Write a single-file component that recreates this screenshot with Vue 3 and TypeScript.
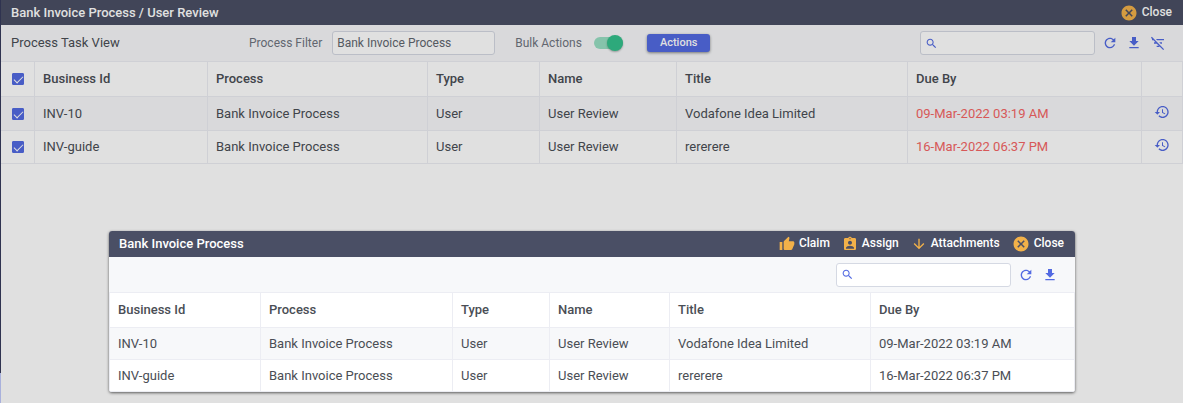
<script setup lang="ts">
import { ref } from 'vue'

interface Task {
  id: string
  process: string
  type: string
  name: string
  title: string
  due: string
}

const tasks: Task[] = [
  { id: 'INV-10', process: 'Bank Invoice Process', type: 'User', name: 'User Review', title: 'Vodafone Idea Limited', due: '09-Mar-2022 03:19 AM' },
  { id: 'INV-guide', process: 'Bank Invoice Process', type: 'User', name: 'User Review', title: 'rererere', due: '16-Mar-2022 06:37 PM' },
]
const columns = ['Business Id', 'Process', 'Type', 'Name', 'Title', 'Due By']

const icons = {
  cancel: 'M12 2C6.47 2 2 6.47 2 12s4.47 10 10 10 10-4.47 10-10S17.53 2 12 2zm5 13.59L15.59 17 12 13.41 8.41 17 7 15.59 10.59 12 7 8.41 8.41 7 12 10.59 15.59 7 17 8.41 13.41 12 17 15.59z',
  search: 'M15.5 14h-.79l-.28-.27C15.41 12.59 16 11.11 16 9.5 16 5.91 13.09 3 9.5 3S3 5.91 3 9.5 5.91 16 9.5 16c1.61 0 3.09-.59 4.23-1.57l.27.28v.79l5 4.99L20.49 19l-4.99-5zm-6 0C7.01 14 5 11.99 5 9.5S7.01 5 9.5 5 14 7.01 14 9.5 11.99 14 9.5 14z',
  refresh: 'M17.65 6.35C16.2 4.9 14.21 4 12 4c-4.42 0-7.99 3.58-7.99 8s3.57 8 7.99 8c3.73 0 6.84-2.55 7.73-6h-2.08c-.82 2.33-3.04 4-5.65 4-3.31 0-6-2.69-6-6s2.69-6 6-6c1.66 0 3.14.69 4.22 1.78L13 11h7V4l-2.35 2.35z',
  download: 'M19 9h-4V3H9v6H5l7 7 7-7zM5 18v2h14v-2H5z',
  filterOff: 'M10.83 8H21V6H8.83l2 2zm5 5H18v-2h-4.17l2 2zM14 16.83V18h-4v-2h3.17l-3-3H6v-2h2.17l-3-3H3V6h.17L1.39 4.22 2.8 2.81l18.38 18.38-1.41 1.41L14 16.83z',
  history: 'M13 3c-4.97 0-9 4.03-9 9H1l3.89 3.89.07.14L9 12H6c0-3.87 3.13-7 7-7s7 3.13 7 7-3.13 7-7 7c-1.93 0-3.68-.79-4.94-2.06l-1.42 1.42C8.27 19.99 10.51 21 13 21c4.97 0 9-4.03 9-9s-4.03-9-9-9zm-1 5v5l4.28 2.54.72-1.21-3.5-2.08V8H12z',
  thumb: 'M1 21h4V9H1v12zm22-11c0-1.1-.9-2-2-2h-6.31l.95-4.57.03-.32c0-.41-.17-.79-.44-1.06L14.17 1 7.59 7.59C7.22 7.95 7 8.45 7 9v10c0 1.1.9 2 2 2h9c.83 0 1.54-.5 1.84-1.22l3.02-7.05c.09-.23.14-.47.14-.73v-2z',
  assign: 'M19 3h-4.18C14.4 1.84 13.3 1 12 1c-1.3 0-2.4.84-2.82 2H5c-1.1 0-2 .9-2 2v14c0 1.1.9 2 2 2h14c1.1 0 2-.9 2-2V5c0-1.1-.9-2-2-2zm-7 0c.55 0 1 .45 1 1s-.45 1-1 1-1-.45-1-1 .45-1 1-1zm0 4c1.66 0 3 1.34 3 3s-1.34 3-3 3-3-1.34-3-3 1.34-3 3-3zm6 12H6v-1.4c0-2 4-3.1 6-3.1s6 1.1 6 3.1V19z',
  arrowDown: 'M20 12l-1.41-1.41L13 16.17V4h-2v12.17l-5.58-5.59L4 12l8 8 8-8z',
}

const dialogActions = [
  { label: 'Claim', icon: icons.thumb, large: false },
  { label: 'Assign', icon: icons.assign, large: false },
  { label: 'Attachments', icon: icons.arrowDown, large: false },
  { label: 'Close', icon: icons.cancel, large: true },
]

const processFilter = ref('Bank Invoice Process')
const bulk = ref(true)
const allSelected = ref(true)
const selected = ref<boolean[]>([true, true])
const search = ref('')
const dialogSearch = ref('')
</script>

<template>
  <div class="page">
    <div class="edge"><span class="edge-dark"></span><span class="edge-light"></span></div>
    <main class="content">
      <header class="bar">
        <h1 class="bar-title">Bank Invoice Process / User Review</h1>
        <button type="button" class="bar-action">
          <svg class="icon icon-lg" viewBox="0 0 24 24"><path :d="icons.cancel" /></svg><span class="bar-label">Close</span>
        </button>
      </header>

      <div class="toolbar">
        <h2 class="view-title">Process Task View</h2>
        <label class="caption" for="process-filter">Process Filter</label>
        <input id="process-filter" v-model="processFilter" class="field" type="text" />
        <label class="caption caption-bulk" for="bulk">Bulk Actions</label>
        <input id="bulk" v-model="bulk" class="switch" type="checkbox" role="switch" />
        <button type="button" class="primary">Actions</button>
        <div class="tools">
          <div class="search">
            <svg class="icon icon-sm" viewBox="0 0 24 24"><path :d="icons.search" /></svg>
            <input v-model="search" type="search" aria-label="Search tasks" />
          </div>
          <div class="tool-group">
            <button type="button" class="tool" aria-label="Refresh">
              <svg class="icon" viewBox="0 0 24 24"><path :d="icons.refresh" /></svg>
            </button>
            <button type="button" class="tool" aria-label="Download">
              <svg class="icon" viewBox="0 0 24 24"><path :d="icons.download" /></svg>
            </button>
            <button type="button" class="tool" aria-label="Clear filters">
              <svg class="icon" viewBox="0 0 24 24"><path :d="icons.filterOff" /></svg>
            </button>
          </div>
        </div>
      </div>

      <table class="grid tasks">
        <colgroup>
          <col class="t-check" /><col class="t-id" /><col class="t-process" /><col class="t-type" />
          <col class="t-name" /><col class="t-title" /><col class="t-due" /><col class="t-log" />
        </colgroup>
        <thead>
          <tr>
            <th class="check-cell"><input v-model="allSelected" class="check" type="checkbox" aria-label="Select all" /></th>
            <th v-for="c in columns" :key="c" scope="col">{{ c }}</th>
            <th></th>
          </tr>
        </thead>
        <tbody>
          <tr v-for="(t, i) in tasks" :key="t.id">
            <td class="check-cell"><input v-model="selected[i]" class="check" type="checkbox" :aria-label="'Select ' + t.id" /></td>
            <td>{{ t.id }}</td>
            <td>{{ t.process }}</td>
            <td>{{ t.type }}</td>
            <td>{{ t.name }}</td>
            <td>{{ t.title }}</td>
            <td class="overdue">{{ t.due }}</td>
            <td class="log-cell">
              <button type="button" class="tool" :aria-label="'History of ' + t.id">
                <svg class="icon" viewBox="0 0 24 24"><path :d="icons.history" /></svg>
              </button>
            </td>
          </tr>
        </tbody>
      </table>
    </main>

    <div class="backdrop">
      <section class="dialog" role="dialog" aria-labelledby="dialog-title">
        <header class="bar dialog-bar">
          <h2 id="dialog-title" class="bar-title">Bank Invoice Process</h2>
          <button v-for="a in dialogActions" :key="a.label" type="button" class="bar-action">
            <svg class="icon" :class="{ 'icon-lg': a.large }" viewBox="0 0 24 24"><path :d="a.icon" /></svg><span class="bar-label">{{ a.label }}</span>
          </button>
        </header>
        <div class="toolbar dialog-toolbar">
          <div class="tools">
            <div class="search">
              <svg class="icon icon-sm" viewBox="0 0 24 24"><path :d="icons.search" /></svg>
              <input v-model="dialogSearch" type="search" aria-label="Search selected tasks" />
            </div>
            <div class="tool-group">
              <button type="button" class="tool" aria-label="Refresh selected">
                <svg class="icon" viewBox="0 0 24 24"><path :d="icons.refresh" /></svg>
              </button>
              <button type="button" class="tool" aria-label="Download selected">
                <svg class="icon" viewBox="0 0 24 24"><path :d="icons.download" /></svg>
              </button>
            </div>
          </div>
        </div>
        <table class="grid picked">
          <colgroup>
            <col class="p-id" /><col class="p-process" /><col class="p-type" />
            <col class="p-name" /><col class="p-title" /><col class="p-due" />
          </colgroup>
          <thead>
            <tr><th v-for="c in columns" :key="c" scope="col">{{ c }}</th></tr>
          </thead>
          <tbody>
            <tr v-for="t in tasks" :key="t.id">
              <td>{{ t.id }}</td>
              <td>{{ t.process }}</td>
              <td>{{ t.type }}</td>
              <td>{{ t.name }}</td>
              <td>{{ t.title }}</td>
              <td>{{ t.due }}</td>
            </tr>
          </tbody>
        </table>
      </section>
    </div>
  </div>
</template>

<style>
body {
  margin: 0;
}
</style>

<style scoped>
.page {
  position: relative;
  display: flex;
  min-height: 100vh;
  background: #fff;
  color: #4a4e55;
  font-family: Roboto, "Liberation Sans", sans-serif;
  font-size: 13px;
  line-height: 16px;
}
.page *,
.page {
  box-sizing: border-box;
}
button,
input {
  margin: 0;
  font-family: inherit;
}
h1,
h2 {
  margin: 0;
}
.edge {
  display: flex;
  flex-direction: column;
  flex: 0 0 1px;
}
.edge-dark {
  flex: 1;
  background: #2f3350;
}
.edge-light {
  flex: 0 0 30px;
  background: #a9b1dc;
}
.content {
  flex: 1;
  min-width: 0;
}

.bar {
  display: flex;
  align-items: center;
  height: 25px;
  padding: 0 11px 0 10px;
  background: #4a4f65;
  color: #fff;
}
.bar-title {
  flex: 1;
  font-size: 13px;
  font-weight: 500;
}
.bar-action {
  display: flex;
  align-items: center;
  gap: 4px;
  padding: 0;
  border: 0;
  background: none;
  color: #fff;
  font-size: 12px;
  font-weight: 500;
  line-height: 16px;
}
.bar-label {
  padding-bottom: 2px;
}
.bar-action .icon {
  fill: #f2b149;
}
.icon {
  display: block;
  width: 16px;
  height: 16px;
  fill: #536ae2;
}
.icon-lg {
  width: 18px;
  height: 18px;
}
.icon-sm {
  width: 13px;
  height: 13px;
}

.toolbar {
  display: flex;
  align-items: center;
  height: 37px;
  padding: 0 17px 0 10px;
  border-bottom: 1px solid #ecedf3;
  background: #f7f8fa;
}
.view-title {
  width: 238px;
  font-size: 13px;
  font-weight: 400;
}
.caption {
  color: #70757f;
  font-size: 12px;
}
.field,
.search {
  height: 24px;
  border: 1px solid #d5d9e3;
  border-radius: 3px;
  background: #fff;
}
.field {
  width: 163px;
  margin-left: 10px;
  padding: 0 4px;
  color: #62676f;
  font-size: 12px;
}
.caption-bulk {
  margin-left: 20px;
}
.switch {
  appearance: none;
  display: flex;
  align-items: center;
  width: 29px;
  height: 12px;
  margin-left: 12px;
  border-radius: 6px;
  background: #98dfc3;
}
.switch::before {
  content: "";
  width: 16px;
  height: 16px;
  flex: none;
  border-radius: 50%;
  background: #34c18c;
  box-shadow: 0 1px 2px rgba(0, 0, 0, 0.3);
}
.switch:checked {
  justify-content: flex-end;
}
.primary {
  height: 18px;
  margin-left: 24px;
  padding: 0 13px;
  border: 0;
  border-radius: 3px;
  background: #536ae2;
  box-shadow: 0 1px 3px rgba(0, 0, 0, 0.45);
  color: #fff;
  font-size: 11px;
  font-weight: 500;
  line-height: 18px;
}
.tools,
.tool-group {
  display: flex;
  align-items: center;
}
.tools {
  gap: 7px;
  margin-left: auto;
}
.tool-group {
  gap: 8px;
}
.search {
  display: flex;
  align-items: center;
  width: 175px;
  padding: 0 4px;
}
.search input {
  flex: 1;
  min-width: 0;
  padding: 0 4px;
  border: 0;
  outline: 0;
  background: none;
  font-size: 12px;
}
.tool {
  padding: 0;
  border: 0;
  background: none;
}

.grid {
  width: 100%;
  table-layout: fixed;
  border-collapse: separate;
  border-spacing: 0;
}
.grid th,
.grid td {
  height: 34px;
  padding: 0 8px;
  border-right: 1px solid #ecedf3;
  border-bottom: 1px solid #ecedf3;
  text-align: left;
  font-weight: 400;
  white-space: nowrap;
}
.grid th {
  height: 35px;
  font-weight: 500;
}
.grid tbody tr:nth-child(odd) {
  background: #f7f8fa;
}
.tasks tr:last-child td {
  height: 33px;
}
.grid.picked td {
  height: 32px;
}
.picked th:first-child,
.picked td:first-child {
  border-left: 1px solid #ecedf3;
}
.t-check { width: 34px; }
.t-id { width: 173px; }
.t-process { width: 220px; }
.t-type { width: 112px; }
.t-name { width: 137px; }
.t-title { width: 231px; }
.t-due { width: 234px; }
.t-log { width: 41px; }
.p-id { width: 152px; }
.p-process { width: 192px; }
.p-type { width: 97px; }
.p-name { width: 120px; }
.p-title { width: 201px; }
.p-due { width: 204px; }

.grid .check-cell {
  padding: 0 0 0 11px;
}
.check {
  appearance: none;
  display: block;
  width: 12px;
  height: 12px;
  border: 1px solid #536ae2;
  border-radius: 1px;
  background: #fff;
}
.check:checked {
  background: #536ae2;
}
.check:checked::before {
  content: "";
  display: block;
  width: 8px;
  height: 4px;
  margin: 2px 0 0 1px;
  border: solid #fff;
  border-width: 0 0 1px 1px;
  transform: rotate(-45deg);
}
.grid .log-cell {
  padding: 0 0 0 12px;
}
.grid .overdue {
  color: #f56565;
}

.backdrop {
  position: absolute;
  inset: 0 0 0 1px;
  display: flex;
  flex-direction: column;
  justify-content: flex-end;
  padding: 0 108px 11px;
  background: rgba(0, 0, 0, 0.12);
}
.dialog {
  overflow: hidden;
  border-radius: 3px;
  background: #fff;
  box-shadow: 0 1px 3px rgba(0, 0, 0, 0.6);
}
.dialog-bar {
  height: 26px;
  gap: 12px;
}
.dialog-toolbar {
  height: 36px;
}
</style>
